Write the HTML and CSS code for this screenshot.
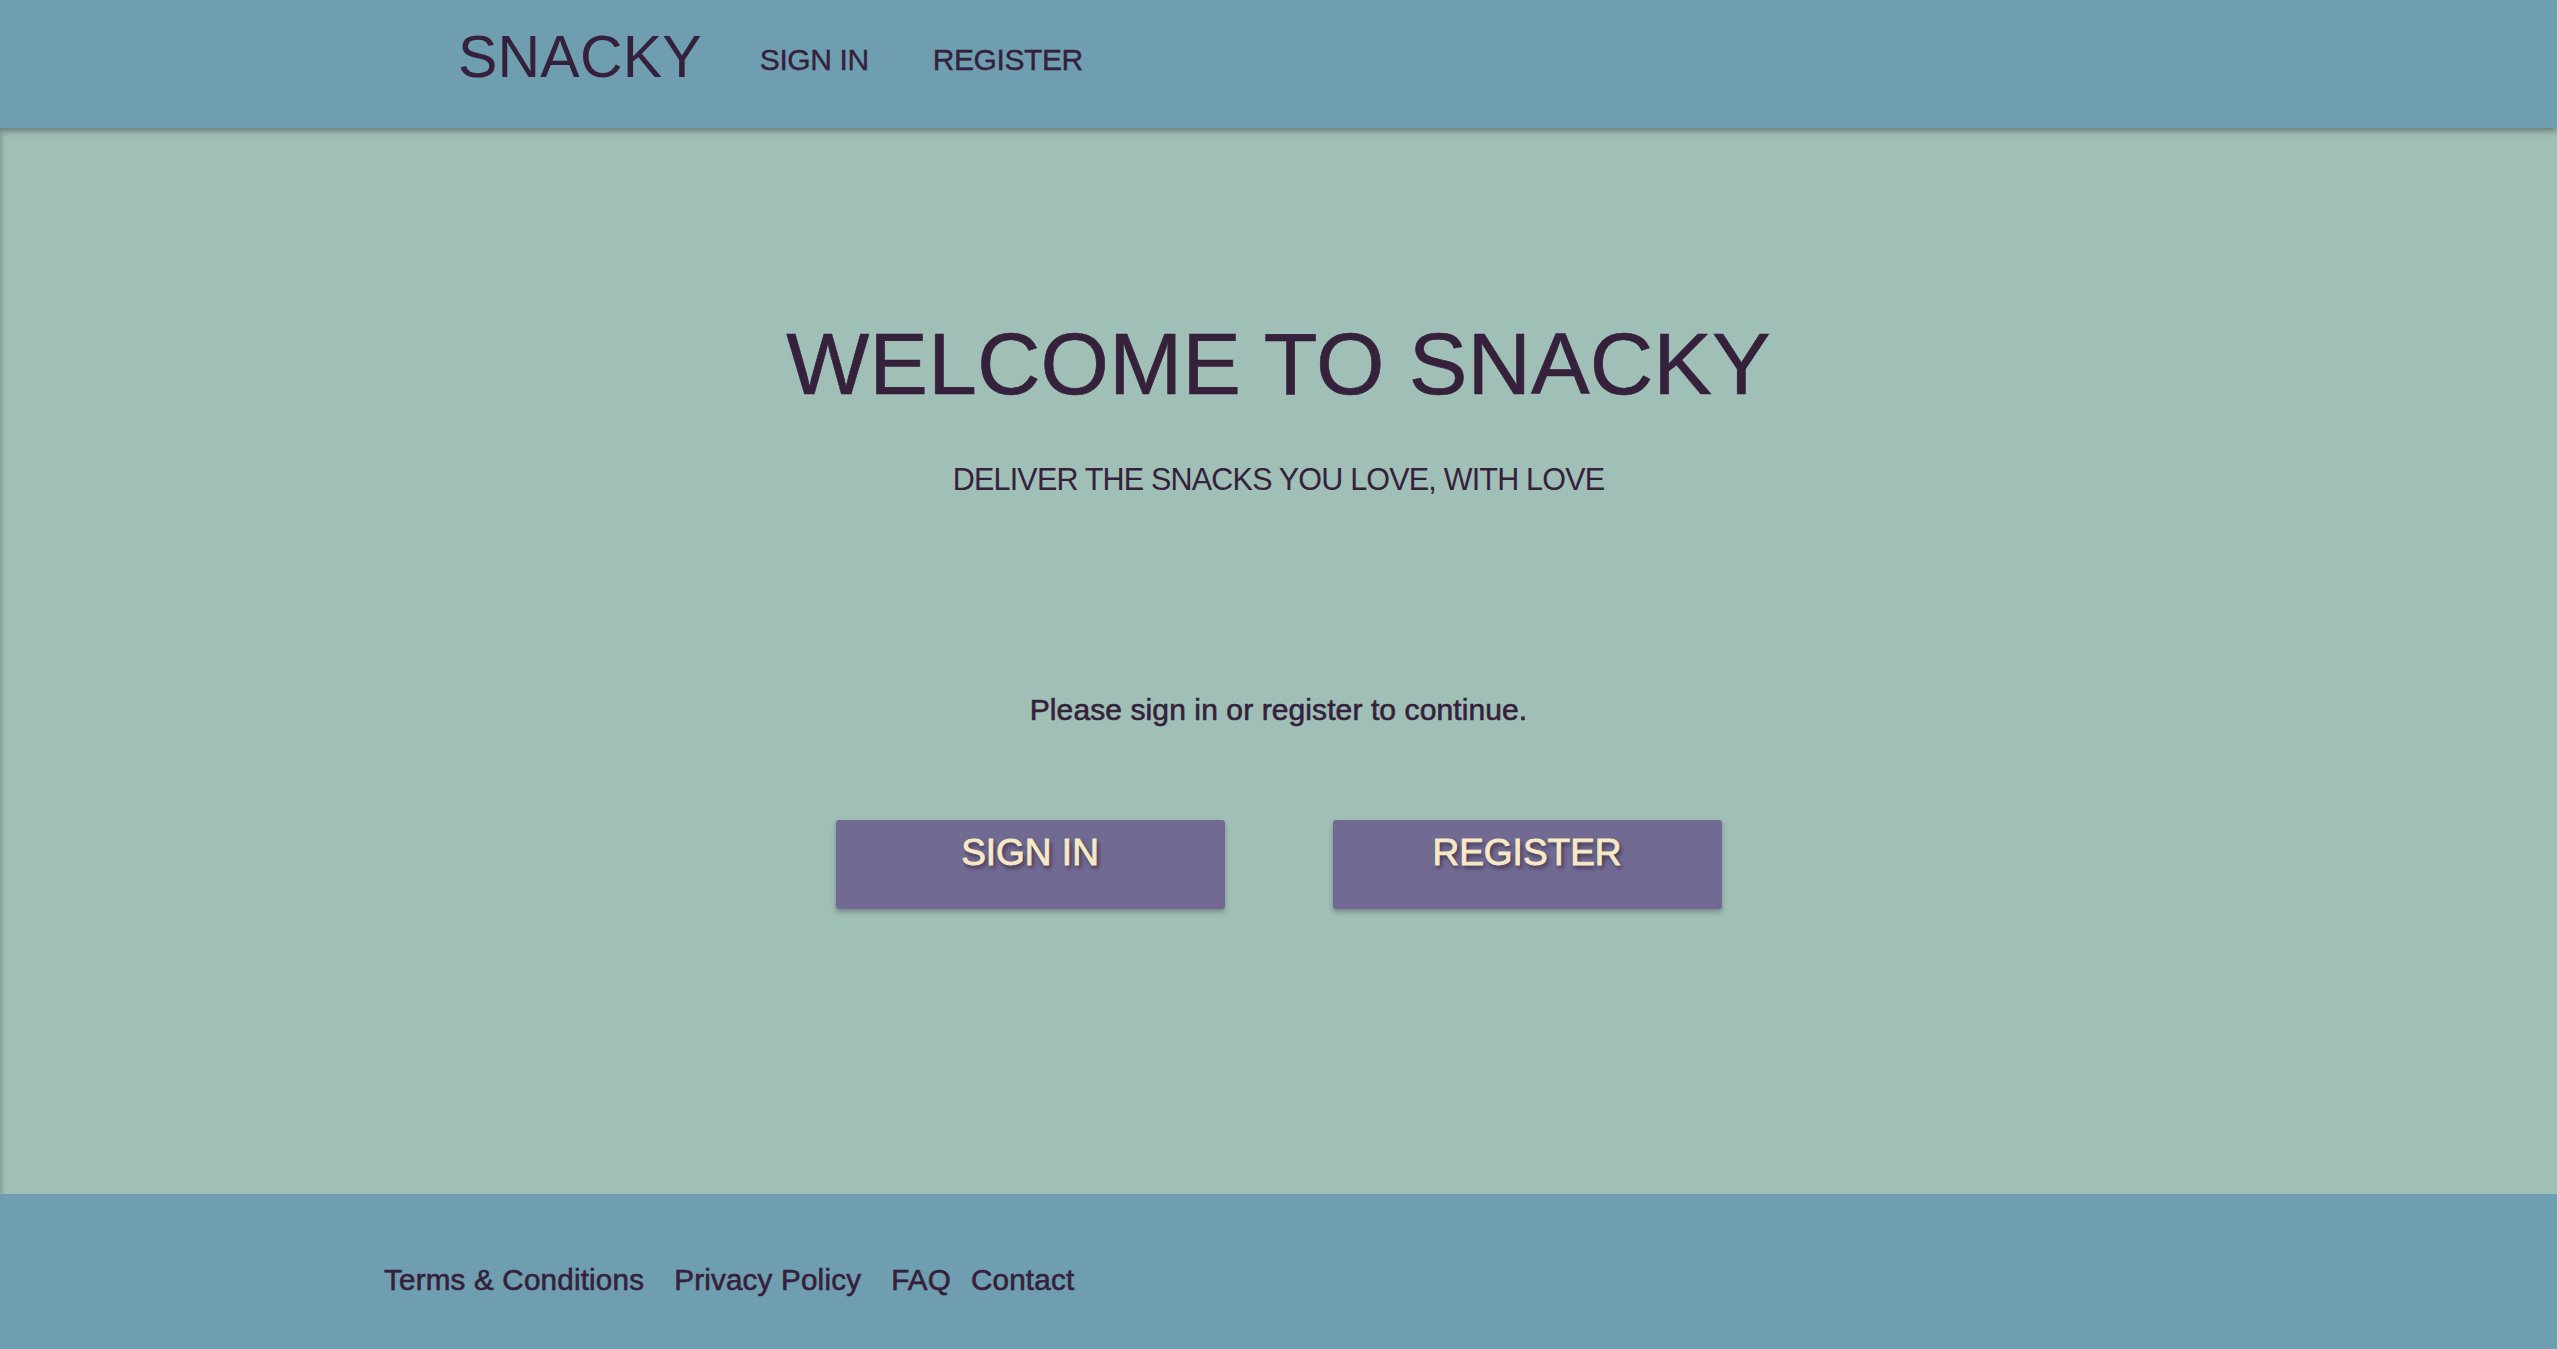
FILE: index.html
```html
<!DOCTYPE html>
<html lang="en">
<head>
<meta charset="utf-8">
<title>Snacky</title>
<link rel="stylesheet" href="styles.css">
</head>
<body>
<div class="page">
  <header class="topbar">
    <a class="logo" href="#">SNACKY</a>
    <nav class="nav">
      <a class="nav-link" href="#">SIGN IN</a>
      <a class="nav-link" href="#">REGISTER</a>
    </nav>
  </header>
  <main class="hero">
    <h1 class="title">WELCOME TO SNACKY</h1>
    <p class="subtitle">DELIVER THE SNACKS YOU LOVE, WITH LOVE</p>
    <p class="prompt">Please sign in or register to continue.</p>
    <div class="actions">
      <a class="btn" href="#">SIGN IN</a>
      <a class="btn" href="#">REGISTER</a>
    </div>
  </main>
  <footer class="footer">
    <a class="foot-link" href="#">Terms &amp; Conditions</a>
    <a class="foot-link" href="#">Privacy Policy</a>
    <a class="foot-link" href="#">FAQ</a>
    <a class="foot-link" href="#">Contact</a>
  </footer>
</div>
</body>
</html>
```

FILE: styles.css
```css
* { box-sizing: border-box; }
html, body { margin: 0; padding: 0; }
body {
  font-family: "Liberation Sans", Arial, sans-serif;
  color: #35213b;
  background: #a0bfb6;
}
a { color: inherit; text-decoration: none; }

.page {
  min-height: 100vh;
  display: flex;
  flex-direction: column;
  box-shadow: inset 4px 0 4px -2px rgba(40, 50, 60, 0.25);
}

.topbar {
  height: 128px;
  background: #6f9eb0;
  display: flex;
  align-items: flex-start;
  padding: 28px 0 0 458px;
  box-shadow: 0 3px 6px rgba(30, 40, 40, 0.45);
  position: relative;
  z-index: 1;
}
.logo {
  font-size: 59px;
  line-height: 1;
  letter-spacing: 0.2px;
}
.nav {
  display: flex;
  gap: 64px;
  margin-left: 58px;
  margin-top: 17px;
}
.nav-link {
  font-size: 30px;
  line-height: 1;
  letter-spacing: -0.4px;
  -webkit-text-stroke: 0.4px currentColor;
}

.hero {
  flex: 1;
  display: flex;
  flex-direction: column;
  align-items: center;
  padding-top: 192px;
}
.title {
  margin: 0;
  font-weight: normal;
  font-size: 88px;
  line-height: 1;
  -webkit-text-stroke: 0.6px currentColor;
}
.subtitle {
  margin: 56px 0 0;
  font-size: 30.5px;
  line-height: 1;
  letter-spacing: -0.8px;
}
.prompt {
  margin: 200px 0 0;
  font-size: 30px;
  line-height: 1;
  letter-spacing: 0.1px;
  -webkit-text-stroke: 0.6px currentColor;
}
.actions {
  margin-top: 95px;
  display: flex;
  gap: 108px;
}
.btn {
  width: 389px;
  height: 89px;
  background: #716a92;
  border-radius: 3px;
  box-shadow: 0 3px 5px rgba(40, 40, 60, 0.35);
  color: #f7e9c4;
  font-size: 37px;
  line-height: 1;
  text-align: center;
  padding-top: 14px;
  -webkit-text-stroke: 0.9px currentColor;
  text-shadow: 2px 3px 4px rgba(40, 25, 50, 0.75);
}

.footer {
  height: 155px;
  background: #6f9eb0;
  display: flex;
  align-items: flex-start;
  padding: 71px 0 0 384px;
}
.foot-link {
  font-size: 29.6px;
  line-height: 1;
  letter-spacing: 0.2px;
  margin-right: 30px;
  -webkit-text-stroke: 0.6px currentColor;
}
.foot-link:nth-child(3) { margin-right: 20px; }
```
